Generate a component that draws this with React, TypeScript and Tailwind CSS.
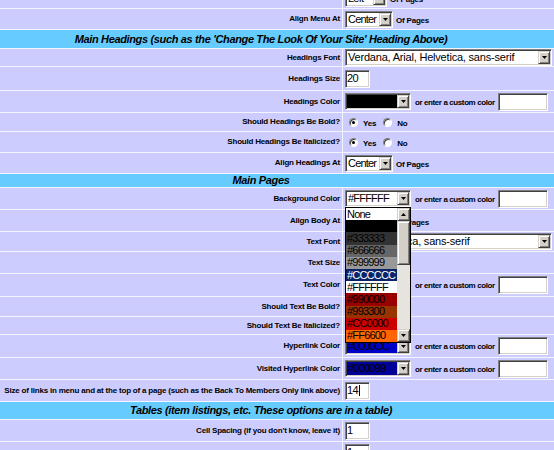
import React from 'react';

const LBL =
  "font-['Liberation_Sans',Arial,sans-serif] text-[8px] font-bold tracking-[-0.2px] leading-none text-black whitespace-nowrap";
const FLD = "font-['Liberation_Sans',Arial,sans-serif] text-[11px] leading-none whitespace-nowrap";
const INSET =
  'border border-t-[#808080] border-l-[#808080] border-b-white border-r-white shadow-[inset_1px_1px_0_#404040,inset_-1px_-1px_0_#d4d0c8] p-px';
const RAISED =
  'bg-[#d4d0c8] border border-t-[#d4d0c8] border-l-[#d4d0c8] border-b-[#404040] border-r-[#404040] shadow-[inset_1px_1px_0_#fff,inset_-1px_-1px_0_#808080]';

function Arrow({ up = false }: { up?: boolean }) {
  return (
    <svg width="5" height="3" viewBox="0 0 5 3">
      <path d={up ? 'M0 3h5L2.5 0z' : 'M0 0h5L2.5 3z'} fill="#000" />
    </svg>
  );
}

function Select({
  w,
  text,
  bg = 'bg-white',
  color = 'text-black',
  track = 'tracking-[-0.8px]',
}: {
  w: string;
  text: string;
  bg?: string;
  color?: string;
  track?: string;
}) {
  return (
    <div className={`flex h-[17px] shrink-0 ${w} ${INSET}`}>
      <div className={`flex-1 min-w-0 flex items-center pl-px overflow-hidden ${bg} ${color} ${FLD} ${track}`}>
        {text}
      </div>
      <div className={`w-[12px] shrink-0 flex items-center justify-center ${RAISED}`}>
        <Arrow />
      </div>
    </div>
  );
}

function TextBox({ value = '', w = 'w-[25px]', caret = false }: { value?: string; w?: string; caret?: boolean }) {
  return (
    <div className={`${w} h-[18px] shrink-0 bg-white flex items-center pl-px tracking-[-0.5px] ${INSET} ${FLD}`}>
      {value}
      {caret && <span className="w-px h-[11px] bg-black ml-px" />}
    </div>
  );
}

function Radio({ on = false }: { on?: boolean }) {
  return (
    <span className="w-[9px] h-[9px] shrink-0 rounded-full bg-white border border-t-[#808080] border-l-[#808080] border-b-white border-r-white shadow-[inset_1px_1px_0_#404040] flex items-center justify-center">
      {on && <span className="w-[3px] h-[3px] rounded-full bg-black" />}
    </span>
  );
}

function Row({ h, label, children }: { h: string; label?: string; children?: React.ReactNode }) {
  return (
    <div className={`flex gap-px ${h}`}>
      <div className={`w-[342px] shrink-0 bg-[#ccccff] flex items-center justify-end pr-[2px] ${LBL}`}>
        {label}
      </div>
      <div className="flex-1 bg-[#ccccff] flex items-center pl-[2px]">{children}</div>
    </div>
  );
}

function Header({ h, text }: { h: string; text: string }) {
  return (
    <div
      className={`${h} bg-[#66ccff] flex items-center justify-center pr-[32px] font-['Liberation_Sans',Arial,sans-serif] text-[11px] font-bold italic tracking-[-0.35px] text-black whitespace-nowrap`}
    >
      {text}
    </div>
  );
}

function OfPages() {
  return <span className={`ml-[3px] mt-[4px] ${LBL}`}>Of Pages</span>;
}

function ColorPick({ select }: { select: React.ReactNode }) {
  return (
    <>
      {select}
      <span className="ml-[4px] mt-[2px] font-['Liberation_Sans',Arial,sans-serif] text-[8px] font-bold tracking-[-0.4px] leading-none text-black whitespace-nowrap">
        or enter a custom color
      </span>
      <div className="ml-[3px]">
        <TextBox w="w-[50px]" />
      </div>
    </>
  );
}

function YesNo() {
  return (
    <div className="flex items-center ml-[4px]">
      <Radio on />
      <span className={`ml-[5px] mt-[3px] ${LBL}`}>Yes</span>
      <span className="ml-[7px]">
        <Radio />
      </span>
      <span className={`ml-[5px] mt-[3px] ${LBL}`}>No</span>
    </div>
  );
}

const OPTIONS: { t: string; bg: string; fg: string }[] = [
  { t: 'None', bg: 'bg-white', fg: 'text-black' },
  { t: '#000000', bg: 'bg-black', fg: 'text-black' },
  { t: '#333333', bg: 'bg-[#333333]', fg: 'text-black' },
  { t: '#666666', bg: 'bg-[#666666]', fg: 'text-black' },
  { t: '#999999', bg: 'bg-[#999999]', fg: 'text-black' },
  { t: '#CCCCCC', bg: 'bg-[#0a246a]', fg: 'text-white' },
  { t: '#FFFFFF', bg: 'bg-white', fg: 'text-black' },
  { t: '#990000', bg: 'bg-[#990000]', fg: 'text-black' },
  { t: '#993300', bg: 'bg-[#993300]', fg: 'text-black' },
  { t: '#CC0000', bg: 'bg-[#cc0000]', fg: 'text-black' },
  { t: '#FF6600', bg: 'bg-[#ff6600]', fg: 'text-black' },
];

function ColorList() {
  return (
    <div className="absolute left-0 top-full z-10 w-[66px] h-[136px] border border-black bg-white flex">
      <div className="flex-1 flex flex-col">
        {OPTIONS.map((o) => (
          <div key={o.t} className={`flex-1 flex items-center pl-px tracking-[-0.8px] ${o.bg} ${o.fg} ${FLD}`}>
            {o.t === '#000000' ? '' : o.t}
          </div>
        ))}
      </div>
      <div className="w-[13px] flex flex-col bg-[#e6e4df]">
        <div className={`h-[13px] flex items-center justify-center ${RAISED}`}>
          <Arrow up />
        </div>
        <div className={`h-[44px] ${RAISED}`} />
        <div className="flex-1" />
        <div className={`h-[13px] flex items-center justify-center ${RAISED}`}>
          <Arrow />
        </div>
      </div>
    </div>
  );
}

export default function App() {
  return (
    <div className="w-[554px] h-[450px] overflow-hidden bg-[#f4f4ff]">
      <div className="flex flex-col gap-px -mt-[12px]">
        <Row h="h-[20px]" label="Position Menu At">
          <Select w="w-[42px]" text="Left" />
          <OfPages />
        </Row>
        <Row h="h-[20px]" label="Align Menu At">
          <Select w="w-[48px]" text="Center" />
          <OfPages />
        </Row>
        <Header h="h-[18px]" text="Main Headings (such as the 'Change The Look Of Your Site' Heading Above)" />
        <Row h="h-[17px]" label="Headings Font">
          <Select w="w-[207px]" text="Verdana, Arial, Helvetica, sans-serif" track="tracking-[-0.2px]" />
        </Row>
        <Row h="h-[23px]" label="Headings Size">
          <TextBox value="20" />
        </Row>
        <Row h="h-[21px]" label="Headings Color">
          <ColorPick select={<Select w="w-[66px]" text="#000000" bg="bg-black" />} />
        </Row>
        <Row h="h-[18px]" label="Should Headings Be Bold?">
          <YesNo />
        </Row>
        <Row h="h-[20px]" label="Should Headings Be Italicized?">
          <YesNo />
        </Row>
        <Row h="h-[20px]" label="Align Headings At">
          <Select w="w-[48px]" text="Center" />
          <OfPages />
        </Row>
        <Header h="h-[13px]" text="Main Pages" />
        <Row h="h-[21px]" label="Background Color">
          <ColorPick
            select={
              <div className="relative">
                <Select w="w-[66px]" text="#FFFFFF" />
                <ColorList />
              </div>
            }
          />
        </Row>
        <Row h="h-[21px]" label="Align Body At">
          <Select w="w-[48px]" text="Center" />
          <OfPages />
        </Row>
        <Row h="h-[19px]" label="Text Font">
          <Select w="w-[207px]" text="Arial, Helvetica, sans-serif" track="tracking-[-0.2px]" />
        </Row>
        <Row h="h-[21px]" label="Text Size">
          <TextBox value="12" />
        </Row>
        <Row h="h-[22px]" label="Text Color">
          <ColorPick select={<Select w="w-[66px]" text="#000000" bg="bg-black" />} />
        </Row>
        <Row h="h-[19px]" label="Should Text Be Bold?">
          <YesNo />
        </Row>
        <Row h="h-[17px]" label="Should Text Be Italicized?">
          <YesNo />
        </Row>
        <Row h="h-[22px]" label="Hyperlink Color">
          <ColorPick select={<Select w="w-[66px]" text="#0000CC" bg="bg-[#0000cc]" />} />
        </Row>
        <Row h="h-[21px]" label="Visited Hyperlink Color">
          <ColorPick select={<Select w="w-[66px]" text="#000099" bg="bg-[#000099]" />} />
        </Row>
        <Row
          h="h-[21px]"
          label="Size of links in menu and at the top of a page (such as the Back To Members Only link above)"
        >
          <TextBox value="14" caret />
        </Row>
        <Header h="h-[17px]" text="Tables (item listings, etc. These options are in a table)" />
        <Row h="h-[21px]" label="Cell Spacing (if you don't know, leave it)">
          <TextBox value="1" />
        </Row>
        <Row h="h-[21px]">
          <TextBox value="1" />
        </Row>
      </div>
    </div>
  );
}
